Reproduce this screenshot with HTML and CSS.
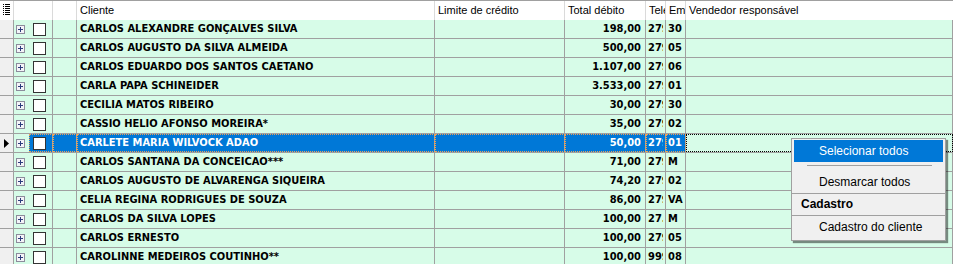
FILE: index.html
```html
<!DOCTYPE html>
<html lang="pt">
<head>
  <meta charset="UTF-8">
  <title>Clientes</title>
  <link rel="stylesheet" href="styles.css">
</head>
<body>
  <div class="grid">
    <div class="head">
      <div class="h ind">
        <svg width="8" height="13" viewBox="0 0 8 13">
          <g fill="#000">
            <rect x="0" y="0" width="1" height="1"/><rect x="2" y="0" width="5" height="1"/>
            <rect x="0" y="2" width="1" height="1"/><rect x="2" y="2" width="5" height="1"/>
            <rect x="0" y="4" width="1" height="1"/><rect x="2" y="4" width="5" height="1"/>
            <rect x="0" y="6" width="1" height="1"/><rect x="2" y="6" width="5" height="1"/>
            <rect x="0" y="8" width="1" height="1"/><rect x="2" y="8" width="5" height="1"/>
            <rect x="0" y="10" width="1" height="1"/><rect x="2" y="10" width="5" height="1"/>
          </g>
        </svg>
      </div>
      <div class="h w-ec"></div>
      <div class="h w-blank"></div>
      <div class="h w-cli">Cliente</div>
      <div class="h w-lim">Limite de crédito</div>
      <div class="h w-tot">Total débito</div>
      <div class="h w-tel">Telefone</div>
      <div class="h w-em">Empresa</div>
      <div class="h w-ven">Vendedor responsável</div>
    </div>

    <div id="rows"></div>
  </div>

  <div class="menu">
    <div class="item active">Selecionar todos</div>
    <div class="sep"></div>
    <div class="item">Desmarcar todos</div>
    <div class="line"></div>
    <div class="item group">Cadastro</div>
    <div class="line"></div>
    <div class="item last">Cadastro do cliente</div>
  </div>

  <script>
    const clientes = [
      ['CARLOS ALEXANDRE GONÇALVES SILVA', '198,00', '27999', '30'],
      ['CARLOS AUGUSTO DA SILVA ALMEIDA', '500,00', '27999', '05'],
      ['CARLOS EDUARDO DOS SANTOS CAETANO', '1.107,00', '27999', '06'],
      ['CARLA PAPA SCHINEIDER', '3.533,00', '27999', '01'],
      ['CECILIA MATOS RIBEIRO', '30,00', '27999', '30'],
      ['CASSIO HELIO AFONSO MOREIRA*', '35,00', '27999', '02'],
      ['CARLETE MARIA WILVOCK ADAO', '50,00', '27999', '01'],
      ['CARLOS SANTANA DA CONCEICAO***', '71,00', '27999', 'M'],
      ['CARLOS AUGUSTO DE ALVARENGA SIQUEIRA', '74,20', '27999', '02'],
      ['CELIA REGINA RODRIGUES DE SOUZA', '86,00', '27999', 'VA'],
      ['CARLOS DA SILVA LOPES', '100,00', '27.99', 'M'],
      ['CARLOS ERNESTO', '100,00', '27999', '05'],
      ['CAROLINNE MEDEIROS COUTINHO**', '100,00', '99999', '08']
    ];
    const selecionado = 6;

    const plus = '<svg width="9" height="9" viewBox="0 0 9 9"><rect x="0.5" y="0.5" width="8" height="8" fill="#f4f4f8" stroke="#8c8c9c"/><path d="M2 4.5h5M4.5 2v5" stroke="#2c3c7c"/></svg>';
    const arrow = '<svg width="5" height="9" viewBox="0 0 5 9"><path d="M0 0L5 4.5L0 9z" fill="#000"/></svg>';

    let html = '';
    clientes.forEach((c, i) => {
      const sel = i === selecionado ? ' sel' : '';
      html += '<div class="row">' +
        '<div class="c ind">' + (sel ? arrow : '') + '</div>' +
        '<div class="c w-exp">' + plus + '</div>' +
        '<div class="c w-chk' + sel + '"><span class="box"></span></div>' +
        '<div class="c w-blank' + sel + '"></div>' +
        '<div class="c w-cli' + sel + '">' + c[0] + '</div>' +
        '<div class="c w-lim' + sel + '"></div>' +
        '<div class="c w-tot num' + sel + '">' + c[1] + '</div>' +
        '<div class="c w-tel' + sel + '"><span class="clip">' + c[2] + '</span></div>' +
        '<div class="c w-em' + sel + '">' + c[3] + '</div>' +
        '<div class="c w-ven' + (sel ? ' focus' : '') + '"></div>' +
        '</div>';
    });
    document.getElementById('rows').innerHTML = html;
  </script>
</body>
</html>
```

FILE: styles.css
```css
* {
  margin: 0;
  padding: 0;
  box-sizing: border-box;
}

body {
  width: 954px;
  height: 264px;
  overflow: hidden;
  background: #ffffff;
  font-family: 'Liberation Sans', Arial, sans-serif;
  color: #000;
}

.grid {
  width: 953px;
  border-top: 1px solid #a0a0a0;
}

/* header */
.head {
  display: flex;
  height: 19px;
  background: #fff;
}

.h {
  height: 19px;
  border-right: 1px solid #dadada;
  font-size: 11px;
  line-height: 19px;
  padding-left: 3px;
  white-space: nowrap;
  overflow: hidden;
  color: #000;
}

.h.ind {
  display: flex;
  align-items: center;
  padding-left: 3px;
}

.h.w-tel,
.h.w-em {
  padding-left: 3px;
  padding-right: 1px;
}

.h.w-ven {
  border-right: none;
  flex: 1;
}

/* data rows */
.row {
  display: flex;
  height: 19px;
  border-bottom: 1px solid #a0a0a0;
  background: #d7fce8;
}

.c {
  height: 18px;
  border-right: 1px solid #a0a0a0;
  font-family: 'DejaVu Sans Condensed', 'DejaVu Sans', sans-serif;
  font-weight: bold;
  font-size: 11px;
  line-height: 18px;
  white-space: nowrap;
  overflow: hidden;
  padding-left: 3px;
}

.c.ind {
  background: #f0f0f0;
  display: flex;
  align-items: center;
  padding-left: 4px;
}

.ind { width: 14px; }
.w-ec { width: 39px; }
.w-exp {
  width: 15px;
  border-right: none;
  display: flex;
  align-items: center;
  padding-left: 2px;
}
.w-chk {
  width: 24px;
  display: flex;
  align-items: center;
  padding-left: 4px;
}
.w-blank { width: 24px; }
.w-cli { width: 358px; }
.w-lim { width: 130px; }
.w-tot { width: 81px; }
.w-tel { width: 20px; padding-left: 2px; }
.w-em { width: 20px; padding-left: 2px; }
.w-ven { width: 267px; }

.clip {
  display: block;
  width: 15px;
  overflow: hidden;
}

.num {
  text-align: right;
  padding-right: 4px;
}

.box {
  display: block;
  width: 13px;
  height: 13px;
  background: #fff;
  border: 1px solid #333;
}

.sel {
  background: #0078d7;
  color: #fff;
  outline: 1px dotted #e8a25a;
  outline-offset: -1px;
}

.focus {
  outline: 1px dotted #000;
  outline-offset: -1px;
}

/* context menu */
.menu {
  position: absolute;
  left: 791px;
  top: 138px;
  width: 155px;
  background: #f0f0f0;
  border: 1px solid #a0a0a0;
  box-shadow: 2px 2px 1px rgba(0, 0, 0, 0.45);
  padding: 1px 1px 0;
  font-size: 12px;
}

.item {
  height: 22px;
  line-height: 22px;
  padding-left: 25px;
  margin: 0 1px;
  color: #000;
}

.item.active {
  background: #0078d7;
  color: #fff;
}

.item.group {
  height: 21px;
  line-height: 21px;
  font-weight: bold;
  padding-left: 7px;
}

.item.last {
  height: 24px;
  line-height: 23px;
}

.sep {
  height: 9px;
  padding-top: 3px;
  margin: 0 12px 0 14px;
}

.sep::after {
  content: '';
  display: block;
  height: 1px;
  background: #a0a0a0;
}

.line {
  height: 1px;
  background: #a0a0a0;
  margin: 0 -1px;
}
```
